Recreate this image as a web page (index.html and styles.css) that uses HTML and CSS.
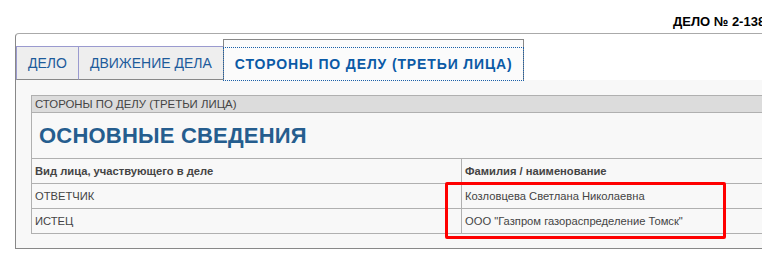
FILE: index.html
```html
<!DOCTYPE html>
<html lang="ru">
<head>
<meta charset="utf-8">
<title>Дело</title>
<link rel="stylesheet" href="styles.css">
</head>
<body>
<div class="page">
  <div class="case-no">ДЕЛО № 2-1387/2019</div>
  <div class="box">
    <ul class="tabs">
      <li class="tab">ДЕЛО</li>
      <li class="tab">ДВИЖЕНИЕ ДЕЛА</li>
      <li class="tab tab-active"><a class="tab-link">СТОРОНЫ ПО ДЕЛУ (ТРЕТЬИ ЛИЦА)</a></li>
    </ul>
    <div class="panel">
      <div class="sheet">
        <div class="sheet-title">СТОРОНЫ ПО ДЕЛУ (ТРЕТЬИ ЛИЦА)</div>
        <div class="sheet-heading">ОСНОВНЫЕ СВЕДЕНИЯ</div>
        <div class="grid">
          <div class="cell head">Вид лица, участвующего в деле</div>
          <div class="cell head col2">Фамилия / наименование</div>
          <div class="cell">ОТВЕТЧИК</div>
          <div class="cell col2">Козловцева Светлана Николаевна</div>
          <div class="cell">ИСТЕЦ</div>
          <div class="cell col2">ООО "Газпром газораспределение Томск"</div>
        </div>
      </div>
    </div>
  </div>
  <div class="mark"></div>
</div>
</body>
</html>
```

FILE: styles.css
```css
html, body {
  margin: 0;
  padding: 0;
  overflow: hidden;
  background: #ffffff;
}
body {
  font-family: "Liberation Sans", Arial, sans-serif;
  width: 762px;
  height: 270px;
}
.page {
  position: relative;
  width: 1100px;
}
.case-no {
  padding: 14px 0 0 673px;
  height: 19px;
  line-height: 16px;
  font-size: 13px;
  font-weight: bold;
  color: #000;
  white-space: nowrap;
}
.box {
  margin-left: 15px;
  border-top: 1px solid #aaaaaa;
  border-left: 1px solid #888888;
  border-bottom: 1px solid #888888;
  border-top-left-radius: 4px;
}
.tabs {
  list-style: none;
  margin: 0;
  padding: 5px 0 0 0;
  display: flex;
  align-items: flex-end;
}
.tab {
  height: 32px;
  line-height: 32px;
  padding: 0 11px 0 11px;
  border-top: 1px solid #9a9acf;
  border-left: 1px solid #9a9acf;
  border-bottom: 1px solid #888888;
  background: #eeeeee;
  color: #1d5b9b;
  font-size: 14px;
  white-space: nowrap;
}
.tab-active {
  position: relative;
  z-index: 1;
  height: auto;
  padding: 8px 0 0 0;
  border: 1px solid #888888;
  border-bottom: none;
  background: #fbfbfb;
  color: #0b5aa6;
  font-weight: bold;
  letter-spacing: 0.87px;
}
.tab-link {
  display: block;
  height: 32px;
  line-height: 33px;
  padding: 0 10px 0 11px;
  outline: 1px dotted #1a5fa8;
}
.panel {
  background: #f8f8f8;
  padding: 15px 0 14px 15px;
}
.sheet {
  border-left: 1px solid #b0b0b0;
  color: #444444;
}
.sheet-title {
  background: #dcdcdc;
  border-top: 1px solid #b0b0b0;
  border-bottom: 1px solid #b0b0b0;
  height: 16px;
  line-height: 17px;
  padding-left: 3px;
  font-size: 11.4px;
}
.sheet-heading {
  height: 45px;
  line-height: 46px;
  padding-left: 7px;
  border-bottom: 1px solid #b0b0b0;
  font-size: 22px;
  font-weight: bold;
  color: #255d8e;
  letter-spacing: 0.2px;
}
.grid {
  display: grid;
  grid-template-columns: 429px 1fr;
}
.cell {
  height: 24px;
  line-height: 24px;
  padding-left: 3px;
  border-bottom: 1px solid #b0b0b0;
  font-size: 11.2px;
  white-space: nowrap;
}
.cell.col2 {
  border-left: 1px solid #b0b0b0;
}
.cell.head {
  font-weight: bold;
}
.mark {
  position: absolute;
  left: 445px;
  top: 182px;
  width: 275px;
  height: 51px;
  border: 3px solid #ff0000;
  border-radius: 2px;
}
```
